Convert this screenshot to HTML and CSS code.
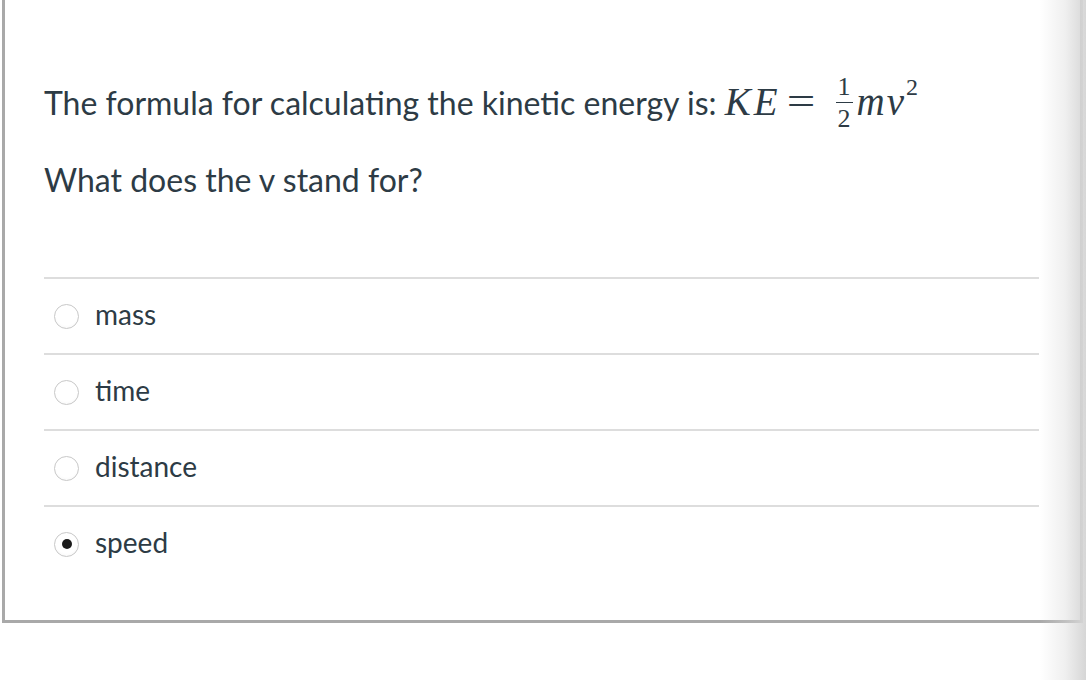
FILE: index.html
```html
<!DOCTYPE html>
<html>
<head>
<meta charset="utf-8">
<link rel="stylesheet" href="styles.css">
</head>
<body>
<div class="card">
  <div class="question">
    <p class="q1">The formula for calculating the kinetic energy is: <span class="math"><span class="mi ke">KE</span><span class="mo">=</span><span class="frac"><span class="num">1</span><span class="den">2</span></span><span class="mi mv">mv</span><sup class="sup">2</sup></span></p>
    <p class="q2">What does the v stand for?</p>
  </div>
  <div class="answers">
    <div class="answer"><span class="radio"></span><span class="label">mass</span></div>
    <div class="answer"><span class="radio"></span><span class="label">time</span></div>
    <div class="answer"><span class="radio"></span><span class="label">distance</span></div>
    <div class="answer"><span class="radio checked"></span><span class="label">speed</span></div>
  </div>
</div>
<div class="edge-shade"></div>
</body>
</html>
```

FILE: styles.css
```css
html, body {
  margin: 0;
  padding: 0;
  background: #ffffff;
  height: 100%;
  overflow: hidden;
}
body {
  font-family: Lato, "Open Sans", sans-serif;
  color: #2d3b45;
}
.card {
  margin-left: 2px;
  width: 1075px;
  border-left: 3px solid #a9a9a9;
  border-right: 3px solid #a9a9a9;
  border-bottom: 3px solid #a9a9a9;
  box-sizing: content-box;
  padding: 83px 0 39px 0;
}
.question {
  padding: 0 41px 0 39px;
  font-size: 32px;
  line-height: 40px;
}
.question p {
  margin: 0;
}
.q2 {
  margin-top: 37px !important;
}
.math {
  font-family: "Liberation Serif", "DejaVu Serif", serif;
  font-size: 39px;
  line-height: 36px;
  white-space: nowrap;
}
.mi {
  font-style: italic;
}
.ke {
  letter-spacing: 3px;
}
.mv {
  letter-spacing: 2px;
}
.mo {
  font-style: normal;
  display: inline-block;
  transform: scaleX(1.3);
  margin: 0 24px 0 9px;
}
.frac {
  display: inline-block;
  vertical-align: -12px;
  margin: -12px 4px -14px 0;
  font-size: 26px;
  line-height: 31px;
  text-align: center;
}
.frac .num {
  display: block;
  border-bottom: 1px solid #2d3b45;
  padding: 0 2px;
}
.frac .den {
  display: block;
  padding: 0 2px;
}
.sup {
  font-size: 24px;
  vertical-align: 20px;
  line-height: 0;
  margin-left: 0;
}
.answers {
  margin: 77px 41px 0 39px;
}
.answer {
  display: flex;
  align-items: center;
  height: 74px;
  border-top: 2px solid #dddddd;
  font-size: 28px;
}
.radio {
  width: 23px;
  height: 23px;
  border-radius: 50%;
  border: 1px solid #c8c8c8;
  background: radial-gradient(circle at 50% 40%, #ffffff 60%, #f2f2f2 100%);
  margin-left: 10px;
  margin-right: 16px;
  display: flex;
  align-items: center;
  justify-content: center;
  flex: none;
}
.radio.checked::after {
  content: "";
  width: 10px;
  height: 10px;
  border-radius: 50%;
  background: #1b1b1b;
}
.label {
  line-height: 30px;
  margin-bottom: 4px;
}
.edge-shade {
  position: absolute;
  top: 0;
  right: 0;
  width: 46px;
  height: 100%;
  background: linear-gradient(to right, rgba(220,220,220,0) 0%, rgba(220,220,220,0.45) 55%, rgba(214,214,214,1) 100%);
  pointer-events: none;
}
```
